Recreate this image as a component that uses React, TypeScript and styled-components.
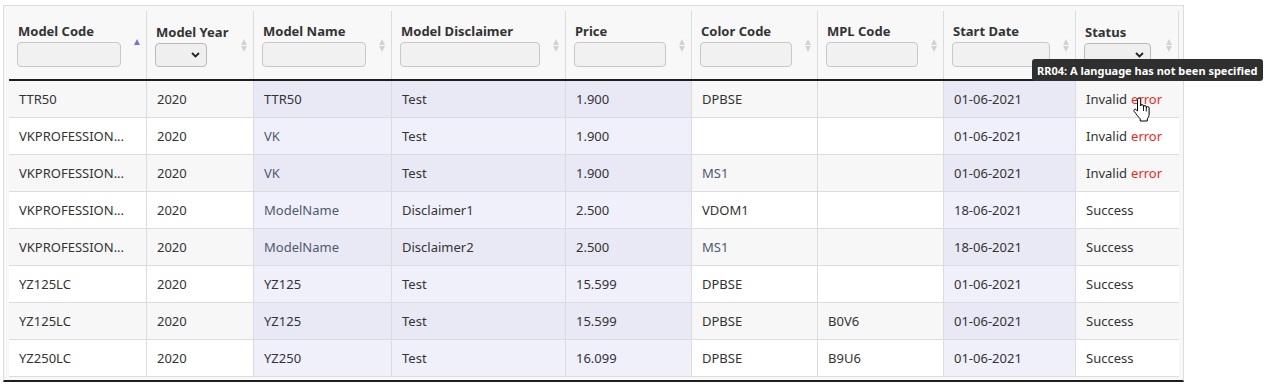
import React from "react";
import styled, { createGlobalStyle } from "styled-components";

const GlobalStyle = createGlobalStyle`
  html, body { margin: 0; padding: 0; background: #ffffff; }
  body { font-family: "Noto Sans", "Open Sans", sans-serif; color: #333; }
  * { box-sizing: border-box; }
`;

const COLS = "138px 107px 138px 174px 126px 126px 126px 132px 103px";

const Page = styled.div`
  padding: 5px 0 0 3px;
`;

const Frame = styled.div`
  position: relative;
  width: 1181px;
  background: #f8f8f8;
  border: 1px solid #dcdcdc;
  border-bottom: 2px solid #1e1e1e;
  padding: 5px 4px 3px 5px;
`;

const HeaderRow = styled.div`
  display: grid;
  grid-template-columns: ${COLS};
  height: 70px;
  border-bottom: 2px solid #1e1e1e;
`;

const HeadCell = styled.div`
  display: flex;
  align-items: center;
  padding: 0 5px 0 8px;
  border-right: 1px solid #dcdcdc;
  min-width: 0;
`;

const HeadBody = styled.div`
  flex: 1;
  min-width: 0;
  display: flex;
  flex-direction: column;
  gap: 2px;
`;

const Label = styled.div`
  font-size: 13px;
  font-weight: 700;
  line-height: 17px;
  color: #333;
  white-space: nowrap;
  padding-left: 1px;
`;

const FilterInput = styled.input`
  width: 100%;
  height: 25px;
  background: #f1f1f1;
  border: 1px solid #c8c8c8;
  border-radius: 4px;
  outline: none;
  padding: 0 6px;
  font: inherit;
`;

const SelectWrap = styled.div<{ $w: number }>`
  position: relative;
  width: ${(p) => p.$w}px;
  height: 24px;
`;

const FilterSelect = styled.select`
  appearance: none;
  -webkit-appearance: none;
  width: 100%;
  height: 100%;
  background: #efefef;
  border: 1px solid #b9b9b9;
  border-radius: 4px;
  outline: none;
  font: inherit;
`;

const Chevron = styled.svg`
  position: absolute;
  right: 7px;
  top: 9px;
  pointer-events: none;
`;

const SortIcon = styled.div`
  width: 7px;
  margin-left: 13px;
  display: flex;
  flex-direction: column;
  gap: 1px;
  flex-shrink: 0;
`;

const Tri = styled.div<{ $dir: "up" | "down"; $color: string }>`
  width: 0;
  height: 0;
  border-left: 3.5px solid transparent;
  border-right: 3.5px solid transparent;
  ${(p) =>
    p.$dir === "up"
      ? `border-bottom: 6px solid ${p.$color};`
      : `border-top: 6px solid ${p.$color};`}
`;

const Row = styled.div`
  display: grid;
  grid-template-columns: ${COLS};
  height: 37px;
  border-bottom: 1px solid #dcdcdc;
`;

const Cell = styled.div<{ $odd: boolean; $hl: boolean; $muted?: boolean }>`
  display: flex;
  align-items: center;
  padding: 0 10px;
  font-size: 13px;
  color: ${(p) => (p.$muted ? "#4f5a6e" : "#333")};
  white-space: nowrap;
  overflow: hidden;
  border-right: 1px solid #dcdcdc;
  background: ${(p) =>
    p.$hl ? (p.$odd ? "#e9e9f5" : "#f0f0fb") : p.$odd ? "#f7f7f7" : "#ffffff"};
  &:last-child { border-right: none; }
`;

const Err = styled.span`
  color: #f2261b;
  margin-left: 4px;
`;

const Tooltip = styled.div`
  position: absolute;
  left: 1028px;
  top: 53px;
  height: 22px;
  padding: 0 6px 0 5px;
  display: flex;
  align-items: center;
  background: #2f2f2f;
  color: #ffffff;
  font-size: 11px;
  font-weight: 700;
  border-radius: 3px;
  white-space: nowrap;
  z-index: 5;
`;

const Cursor = styled.svg`
  position: absolute;
  left: 1128px;
  top: 90px;
  z-index: 6;
`;

type Col = { label: string; kind: "input" | "select"; width?: number };

const columns: Col[] = [
  { label: "Model Code", kind: "input" },
  { label: "Model Year", kind: "select", width: 52 },
  { label: "Model Name", kind: "input" },
  { label: "Model Disclaimer", kind: "input" },
  { label: "Price", kind: "input" },
  { label: "Color Code", kind: "input" },
  { label: "MPL Code", kind: "input" },
  { label: "Start Date", kind: "input" },
  { label: "Status", kind: "select", width: 67 },
];

const highlighted = [2, 3, 4, 7];

const rows: string[][] = [
  ["TTR50", "2020", "TTR50", "Test", "1.900", "DPBSE", "", "01-06-2021", "invalid"],
  ["VKPROFESSION...", "2020", "VK", "Test", "1.900", "", "", "01-06-2021", "invalid"],
  ["VKPROFESSION...", "2020", "VK", "Test", "1.900", "MS1", "", "01-06-2021", "invalid"],
  ["VKPROFESSION...", "2020", "ModelName", "Disclaimer1", "2.500", "VDOM1", "", "18-06-2021", "Success"],
  ["VKPROFESSION...", "2020", "ModelName", "Disclaimer2", "2.500", "MS1", "", "18-06-2021", "Success"],
  ["YZ125LC", "2020", "YZ125", "Test", "15.599", "DPBSE", "", "01-06-2021", "Success"],
  ["YZ125LC", "2020", "YZ125", "Test", "15.599", "DPBSE", "B0V6", "01-06-2021", "Success"],
  ["YZ250LC", "2020", "YZ250", "Test", "16.099", "DPBSE", "B9U6", "01-06-2021", "Success"],
];

const mutedValues = ["ModelName", "MS1", "VK"];

function Sort({ active }: { active?: boolean }) {
  return (
    <SortIcon>
      <Tri $dir="up" $color={active ? "#7476d6" : "#d2d2d2"} />
      <Tri $dir="down" $color={active ? "transparent" : "#d2d2d2"} />
    </SortIcon>
  );
}

export default function App() {
  return (
    <>
      <GlobalStyle />
      <Page>
        <Frame>
          <HeaderRow>
            {columns.map((c, i) => (
              <HeadCell key={c.label}>
                <HeadBody>
                  <Label>{c.label}</Label>
                  {c.kind === "input" ? (
                    <FilterInput type="text" />
                  ) : (
                    <SelectWrap $w={c.width || 52}>
                      <FilterSelect defaultValue="">
                        <option value=""></option>
                      </FilterSelect>
                      <Chevron width="9" height="6" viewBox="0 0 9 6">
                        <path d="M1 1l3.5 3.5L8 1" fill="none" stroke="#222" strokeWidth="1.8" />
                      </Chevron>
                    </SelectWrap>
                  )}
                </HeadBody>
                <Sort active={i === 0} />
              </HeadCell>
            ))}
          </HeaderRow>
          {rows.map((r, ri) => (
            <Row key={ri}>
              {r.map((v, ci) => (
                <Cell
                  key={ci}
                  $odd={ri % 2 === 0}
                  $hl={highlighted.includes(ci)}
                  $muted={mutedValues.includes(v)}
                >
                  {ci === 8 && v === "invalid" ? (
                    <>
                      Invalid<Err>error</Err>
                    </>
                  ) : (
                    v
                  )}
                </Cell>
              ))}
            </Row>
          ))}
          <Tooltip>RR04: A language has not been specified</Tooltip>
          <Cursor width="20" height="26" viewBox="0 0 20 26">
            <path
              d="M5.5 3.5a1.6 1.6 0 0 1 3.2 0V10a1.4 1.4 0 0 1 2.8 0v1a1.4 1.4 0 0 1 2.8 0v1a1.4 1.4 0 0 1 2.8 0v6c0 2.2-0.9 3.6-1.8 4.8V25H8.2v-2.2C6.6 21.2 4.2 18.2 2.2 15.4a1.3 1.3 0 0 1 2-1.7l1.3 1.4Z"
              fill="#ffffff"
              stroke="#000000"
              strokeWidth="1"
              strokeLinejoin="round"
            />
            <path d="M11.5 11v4M14.3 12v3.5" stroke="#000" strokeWidth="0.9" />
          </Cursor>
        </Frame>
      </Page>
    </>
  );
}
